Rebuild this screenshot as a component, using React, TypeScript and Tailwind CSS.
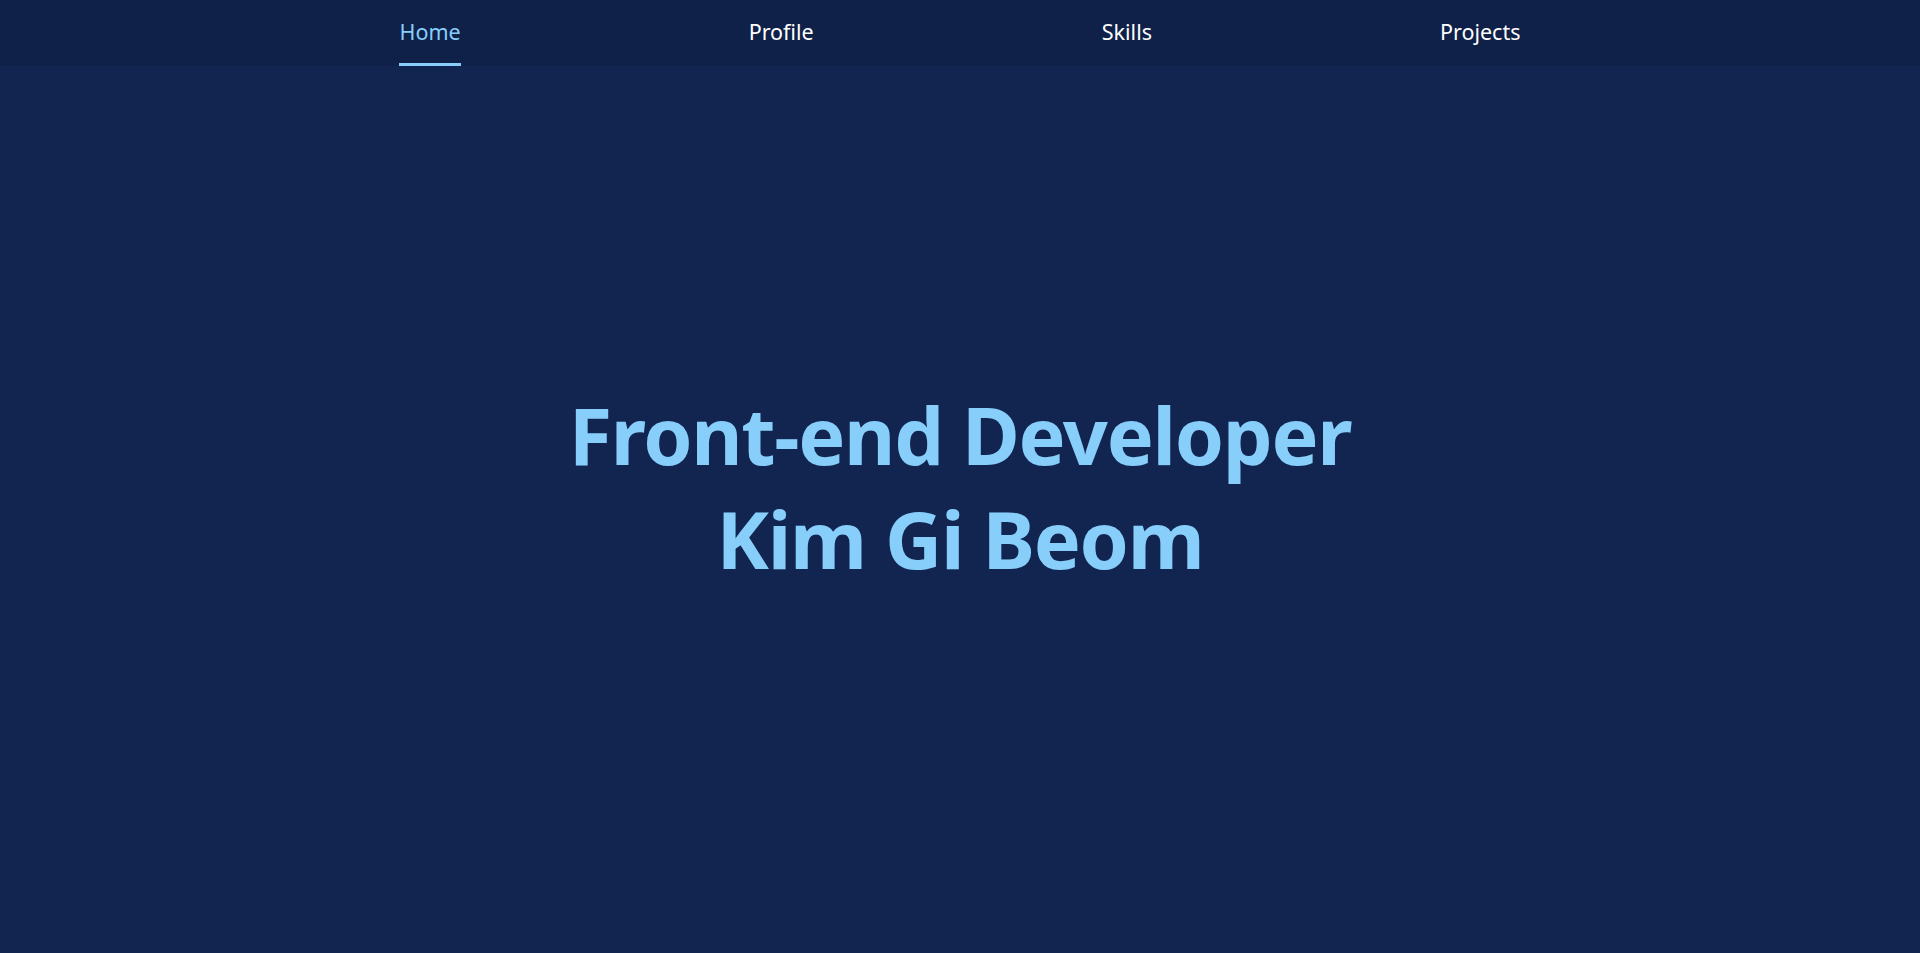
import React from "react";

const font = { fontFamily: '"Noto Sans", "Open Sans", "Noto Sans CJK KR", sans-serif' };

export default function App() {
  return (
    <div className="min-h-[953px] w-full bg-[#112550] flex flex-col" style={font}>
      <nav className="h-[66px] w-full bg-[#0f2148] flex items-stretch justify-center gap-[288px]">
        <a className="flex items-center h-[66px] pt-[1px] border-b-[3px] border-[#87cefa] text-[#87cefa] text-[21.5px] leading-none pb-[1px]">
          Home
        </a>
        <a className="flex items-center pb-[3px] text-white text-[21.5px] leading-none">Profile</a>
        <a className="flex items-center pb-[3px] text-white text-[21.5px] leading-none">Skills</a>
        <a className="flex items-center pb-[3px] text-white text-[21.5px] leading-none">Projects</a>
      </nav>
      <main className="flex-1 flex flex-col items-center pt-[317px]">
        <h1 className="text-[#87cefa] text-[79px] font-bold leading-[104px] tracking-[-1.3px] text-center">
          Front-end Developer
          <br />
          Kim Gi Beom
        </h1>
      </main>
    </div>
  );
}
